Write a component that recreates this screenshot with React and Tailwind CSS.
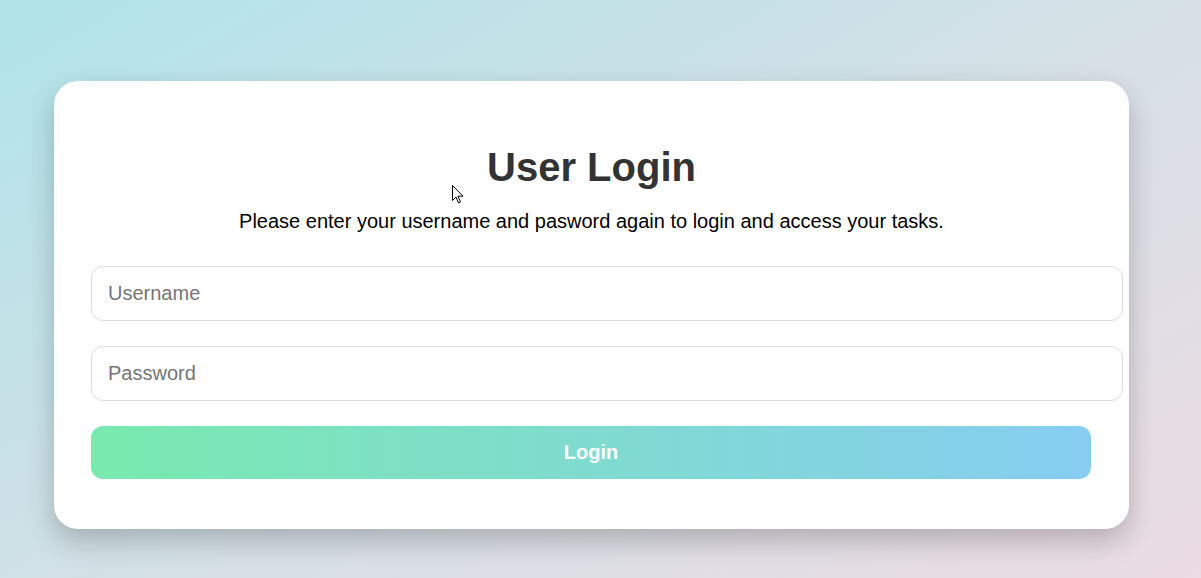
export default function App() {
  return (
    <div
      className="relative w-[1201px] h-[578px] overflow-hidden bg-[linear-gradient(150deg,#b0e4e9_0%,#d6e0e6_55%,#ecdce3_100%)] pl-[54px] pt-[81px]"
      style={{ fontFamily: '"Liberation Sans", Arial, sans-serif' }}
    >
      <div className="w-[1075px] h-[448px] bg-white rounded-[24px] shadow-[0_12px_28px_rgba(0,0,0,0.22)] px-[37px] pt-[63px] pb-[50px] flex flex-col">
        <h2 className="text-center text-[40px] leading-[46px] font-bold text-[#333333]">User Login</h2>
        <p className="mt-[20px] text-center text-[20px] leading-[23px] text-black">
          Please enter your username and pasword again to login and access your tasks.
        </p>
        <input
          type="text"
          placeholder="Username"
          className="mt-[33px] w-[1032px] h-[55px] shrink-0 rounded-[12px] border border-[#dddddd] px-[16px] text-[20px] text-black placeholder:text-[#757575] outline-none"
        />
        <input
          type="password"
          placeholder="Password"
          className="mt-[25px] w-[1032px] h-[55px] shrink-0 rounded-[12px] border border-[#dddddd] px-[16px] text-[20px] text-black placeholder:text-[#757575] outline-none"
        />
        <button className="mt-[25px] w-[1000px] h-[53px] shrink-0 rounded-[12px] bg-[linear-gradient(to_right,#79e9ae,#86cdf1)] text-white font-bold text-[20px] leading-[23px] pb-[1px]">
          Login
        </button>
      </div>
      <svg className="absolute left-[452px] top-[185px]" width="12" height="19" viewBox="0 0 12 19">
        <path d="M0.5 0.5 L0.5 15.5 L4 12 L6.5 18 L8.5 17 L6 11.2 L11 11.2 Z" fill="white" stroke="black" strokeWidth="1" strokeLinejoin="round" />
      </svg>
    </div>
  );
}
